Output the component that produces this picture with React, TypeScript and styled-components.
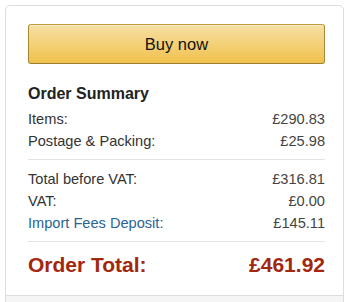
import React from "react";
import styled, { createGlobalStyle } from "styled-components";

const Global = createGlobalStyle`
  html, body { margin: 0; padding: 0; background: #fff; }
  body { font-family: "Liberation Sans", Arial, sans-serif; }
`;

const Page = styled.div`
  padding: 5px 0 0 5px;
  width: 339px;
`;

const Card = styled.div`
  border: 1px solid #dddddd;
  border-radius: 5px 5px 0 0;
  background: #fff;
`;

const Main = styled.div`
  padding: 18px 18px 17px 22px;
`;

const BuyButton = styled.button`
  display: block;
  width: 100%;
  height: 40px;
  border: 1px solid #b28d35;
  border-color: #c29b3c #a88734 #9c7e31;
  border-radius: 3px;
  background: linear-gradient(to bottom, #f7dfa5, #f0c14b);
  box-shadow: inset 0 1px 0 rgba(255, 255, 255, 0.4);
  font-family: "Liberation Sans", Arial, sans-serif;
  font-size: 16.5px;
  color: #111;
  cursor: pointer;
  padding: 0;
`;

const Title = styled.h3`
  margin: 20px 0 4px;
  font-size: 16px;
  line-height: 20px;
  font-weight: 700;
  color: #222;
`;

const Row = styled.div<{ $link?: boolean }>`
  display: flex;
  justify-content: space-between;
  font-size: 14.6px;
  line-height: 22px;
  color: #333;
  & > span:first-child {
    color: ${(p) => (p.$link ? "#2a6496" : "#333")};
  }
  & > span:last-child {
    color: #444;
  }
`;

const Divider = styled.hr<{ $after?: number }>`
  border: 0;
  border-top: 1px solid #e3e3e3;
  margin: 7px 0 ${(p) => p.$after ?? 8}px;
`;

const TotalRow = styled.div`
  display: flex;
  justify-content: space-between;
  font-size: 21px;
  line-height: 26px;
  font-weight: 700;
  color: #a3270d;
`;

const Footer = styled.div`
  border-top: 1px solid #dddddd;
  background: #f5f5f5;
  height: 20px;
`;

export default function App() {
  return (
    <>
      <Global />
      <Page>
        <Card>
          <Main>
            <BuyButton>Buy now</BuyButton>
            <Title>Order Summary</Title>
            <Row>
              <span>Items:</span>
              <span>£290.83</span>
            </Row>
            <Row>
              <span>Postage &amp; Packing:</span>
              <span>£25.98</span>
            </Row>
            <Divider />
            <Row>
              <span>Total before VAT:</span>
              <span>£316.81</span>
            </Row>
            <Row>
              <span>VAT:</span>
              <span>£0.00</span>
            </Row>
            <Row $link>
              <span>Import Fees Deposit:</span>
              <span>£145.11</span>
            </Row>
            <Divider $after={10} />
            <TotalRow>
              <span>Order Total:</span>
              <span>£461.92</span>
            </TotalRow>
          </Main>
          <Footer />
        </Card>
      </Page>
    </>
  );
}
